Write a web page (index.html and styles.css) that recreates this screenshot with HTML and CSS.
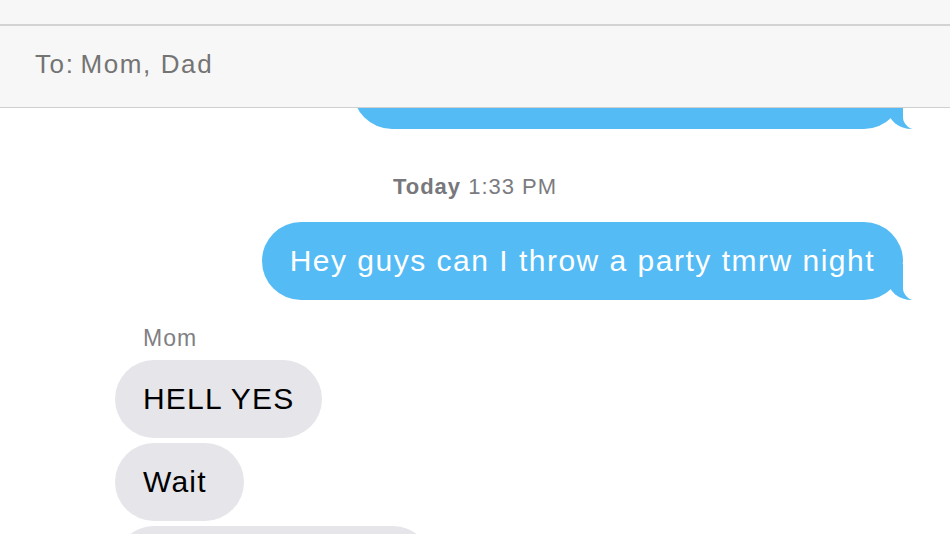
FILE: index.html
```html
<!DOCTYPE html>
<html>
<head>
<meta charset="utf-8">
<link rel="stylesheet" href="styles.css">
</head>
<body>
<div class="screen">
  <div class="header">
    <div class="statusbar"></div>
    <div class="tobar"><span class="to-label">To:</span> Mom, Dad</div>
  </div>
  <div class="thread">
    <div class="row row-out"><div class="bubble out hidden-top">&nbsp;</div></div>
    <div class="stamp"><b>Today</b> 1:33 PM</div>
    <div class="row row-out first-out"><div class="bubble out">Hey guys can I throw a party tmrw night</div></div>
    <div class="sender">Mom</div>
    <div class="row row-in"><div class="bubble in">HELL YES</div></div>
    <div class="row row-in"><div class="bubble in wait">Wait</div></div>
    <div class="row row-in"><div class="bubble in wide">&nbsp;</div></div>
  </div>
</div>
</body>
</html>
```
FILE: styles.css
```css
* { box-sizing: border-box; }
html, body { margin: 0; padding: 0; background: #fff; }
body { font-family: "Liberation Sans", Arial, sans-serif; }
.screen { width: 950px; height: 534px; overflow: hidden; position: relative; background: #fff; }
.header { position: relative; z-index: 2; background: #f7f7f7; }
.statusbar { height: 26px; border-bottom: 2px solid #d3d3d3; background: #f7f7f7; }
.tobar { height: 82px; border-bottom: 1px solid #cfcfcf; padding-left: 35px; display: flex; align-items: center; font-size: 26px; color: #747474; letter-spacing: 1.6px; padding-bottom: 4px; }
.to-label { margin-right: 6px; }
.thread { display: flex; flex-direction: column; position: relative; z-index: 1; }
.row { display: flex; }
.row-out { justify-content: flex-end; padding-right: 47px; }
.row-in { justify-content: flex-start; padding-left: 115px; margin-top: 5px; }
.bubble { position: relative; height: 78px; border-radius: 39px; padding: 0 28px; display: flex; align-items: center; font-size: 30px; letter-spacing: 1.5px; white-space: nowrap; }
.out { background: #55bbf5; color: #fff; }
.in { background: #e5e5ea; color: #000; letter-spacing: 1.2px; }
.out::before { content: ""; position: absolute; right: -13px; bottom: 0; width: 28px; height: 36px; background: #55bbf5; border-bottom-left-radius: 24px 20px; }
.out::after { content: ""; position: absolute; right: -31px; bottom: -1px; width: 31px; height: 38px; background: #fff; border-bottom-left-radius: 15px 13px; }
.hidden-top { width: 550px; margin-top: -57px; }
.stamp { text-align: center; font-size: 22px; color: #7b7b80; margin-top: 45px; height: 26px; line-height: 26px; letter-spacing: 1px; }
.stamp b { font-weight: bold; color: #77777c; }
.first-out { margin-top: 22px; }
.sender { margin-top: 25px; height: 26px; line-height: 26px; font-size: 23px; letter-spacing: 1px; color: #808085; padding-left: 143px; margin-bottom: 9px; }
.sender + .row-in { margin-top: 0; }
.wait { width: 129px; }
.wide { width: 317px; }
```
